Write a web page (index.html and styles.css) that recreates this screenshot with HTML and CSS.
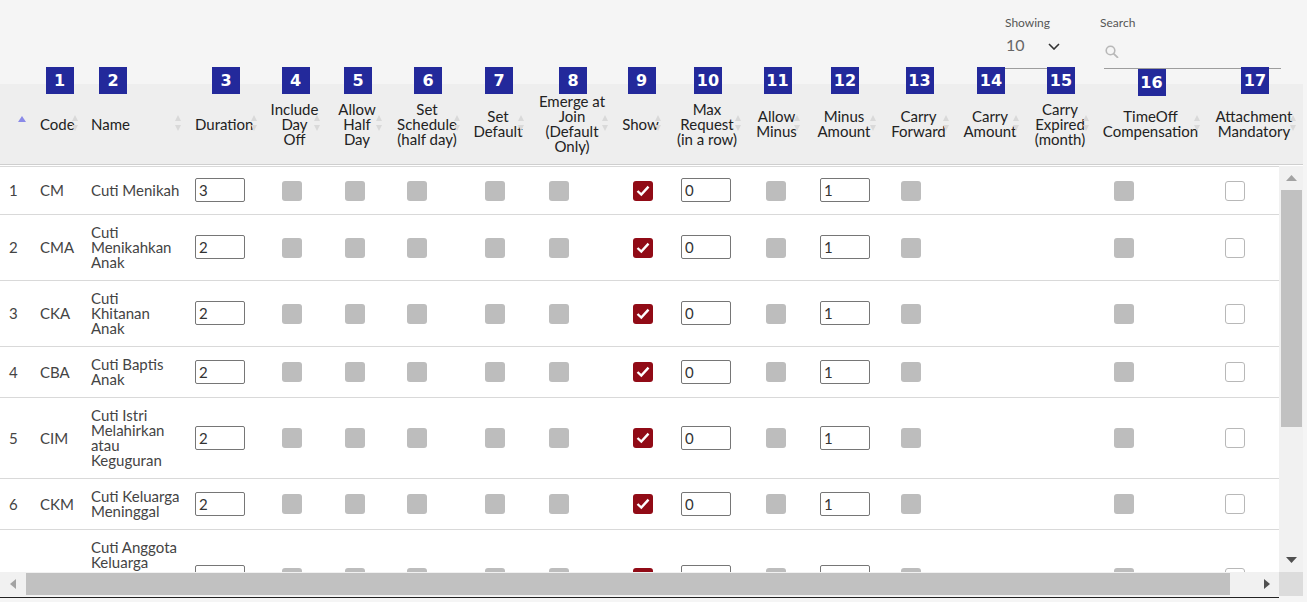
FILE: index.html
```html
<!DOCTYPE html>
<html lang="id">
<head>
<meta charset="utf-8">
<title>Time Off Types</title>
<link rel="stylesheet" href="styles.css">
</head>
<body>
<div class="toolbar">
  <div class="field showing">
    <span class="field-label">Showing</span>
    <div class="select">
      <span class="select-value">10</span>
      <svg class="chevron" width="12" height="7" viewBox="0 0 12 7"><path d="M1 1 L6 6 L11 1" fill="none" stroke="#333" stroke-width="1.6"/></svg>
    </div>
  </div>
  <div class="field search">
    <span class="field-label">Search</span>
    <div class="search-box">
      <svg class="search-icon" width="14" height="13" viewBox="0 0 14 13"><circle cx="5.5" cy="5.5" r="4.3" fill="none" stroke="#b8b8b8" stroke-width="1.6"/><path d="M8.6 8.6 L12.5 12.3" stroke="#b8b8b8" stroke-width="1.8" stroke-linecap="round"/></svg>
    </div>
  </div>
</div>

<div class="table-frame">
  <div class="head-wrap">
    <table class="dt">
      <colgroup>
        <col class="w-idx"><col class="w-code"><col class="w-name"><col class="w-dur"><col class="w-inc"><col class="w-half"><col class="w-sched"><col class="w-def"><col class="w-emerge"><col class="w-show"><col class="w-max"><col class="w-minus"><col class="w-mamt"><col class="w-cfwd"><col class="w-camt"><col class="w-cexp"><col class="w-comp"><col class="w-att">
      </colgroup>
      <thead>
        <tr>
          <th class="sorting-asc"></th>
          <th class="sorting left"><span class="badge">1</span>Code</th>
          <th class="sorting left"><span class="badge at-text">2</span>Name</th>
          <th class="sorting left dur"><span class="badge">3</span>Duration</th>
          <th class="sorting"><span class="badge">4</span>Include<br>Day<br>Off</th>
          <th class="sorting"><span class="badge">5</span>Allow<br>Half<br>Day</th>
          <th class="sorting"><span class="badge">6</span>Set<br>Schedule<br>(half day)</th>
          <th class="sorting"><span class="badge">7</span>Set<br>Default</th>
          <th class="sorting"><span class="badge">8</span>Emerge at<br>Join<br>(Default<br>Only)</th>
          <th class="sorting"><span class="badge">9</span>Show</th>
          <th class="sorting"><span class="badge">10</span>Max<br>Request<br>(in a row)</th>
          <th class="sorting"><span class="badge">11</span>Allow<br>Minus</th>
          <th class="sorting"><span class="badge">12</span>Minus<br>Amount</th>
          <th class="sorting"><span class="badge">13</span>Carry<br>Forward</th>
          <th class="sorting"><span class="badge">14</span>Carry<br>Amount</th>
          <th class="sorting"><span class="badge">15</span>Carry<br>Expired<br>(month)</th>
          <th class="sorting"><span class="badge low">16</span>TimeOff<br>Compensation</th>
          <th class="sorting"><span class="badge">17</span>Attachment<br>Mandatory</th>
        </tr>
      </thead>
    </table>
  </div>

  <div class="body-row">
    <div class="viewport">
      <table class="dt">
        <colgroup>
          <col class="w-idx"><col class="w-code"><col class="w-name"><col class="w-dur"><col class="w-inc"><col class="w-half"><col class="w-sched"><col class="w-def"><col class="w-emerge"><col class="w-show"><col class="w-max"><col class="w-minus"><col class="w-mamt"><col class="w-cfwd"><col class="w-camt"><col class="w-cexp"><col class="w-comp"><col class="w-att">
        </colgroup>
        <tbody>
          <tr>
            <td class="idx">1</td><td>CM</td><td class="name">Cuti Menikah</td>
            <td class="in-first"><input class="num" type="text" value="3"></td>
            <td class="cbx"><span class="cb off"></span></td><td class="cbx"><span class="cb off"></span></td><td class="cbx"><span class="cb off"></span></td><td class="cbx"><span class="cb off"></span></td><td class="cbx"><span class="cb off"></span></td>
            <td class="cbx"><span class="cb on"><svg width="20" height="20" viewBox="0 0 20 20"><path d="M4.5 10 L8.3 13.6 L15.5 5.6" fill="none" stroke="#fff" stroke-width="2.4"/></svg></span></td>
            <td class="in"><input class="num" type="text" value="0"></td>
            <td class="cbx"><span class="cb off"></span></td>
            <td class="in"><input class="num" type="text" value="1"></td>
            <td class="cbx"><span class="cb off"></span></td>
            <td></td><td></td>
            <td class="cbx"><span class="cb off"></span></td>
            <td class="cbx"><span class="cb empty"></span></td>
          </tr>
          <tr>
            <td class="idx">2</td><td>CMA</td><td class="name">Cuti Menikahkan Anak</td>
            <td class="in-first"><input class="num" type="text" value="2"></td>
            <td class="cbx"><span class="cb off"></span></td><td class="cbx"><span class="cb off"></span></td><td class="cbx"><span class="cb off"></span></td><td class="cbx"><span class="cb off"></span></td><td class="cbx"><span class="cb off"></span></td>
            <td class="cbx"><span class="cb on"><svg width="20" height="20" viewBox="0 0 20 20"><path d="M4.5 10 L8.3 13.6 L15.5 5.6" fill="none" stroke="#fff" stroke-width="2.4"/></svg></span></td>
            <td class="in"><input class="num" type="text" value="0"></td>
            <td class="cbx"><span class="cb off"></span></td>
            <td class="in"><input class="num" type="text" value="1"></td>
            <td class="cbx"><span class="cb off"></span></td>
            <td></td><td></td>
            <td class="cbx"><span class="cb off"></span></td>
            <td class="cbx"><span class="cb empty"></span></td>
          </tr>
          <tr>
            <td class="idx">3</td><td>CKA</td><td class="name">Cuti Khitanan Anak</td>
            <td class="in-first"><input class="num" type="text" value="2"></td>
            <td class="cbx"><span class="cb off"></span></td><td class="cbx"><span class="cb off"></span></td><td class="cbx"><span class="cb off"></span></td><td class="cbx"><span class="cb off"></span></td><td class="cbx"><span class="cb off"></span></td>
            <td class="cbx"><span class="cb on"><svg width="20" height="20" viewBox="0 0 20 20"><path d="M4.5 10 L8.3 13.6 L15.5 5.6" fill="none" stroke="#fff" stroke-width="2.4"/></svg></span></td>
            <td class="in"><input class="num" type="text" value="0"></td>
            <td class="cbx"><span class="cb off"></span></td>
            <td class="in"><input class="num" type="text" value="1"></td>
            <td class="cbx"><span class="cb off"></span></td>
            <td></td><td></td>
            <td class="cbx"><span class="cb off"></span></td>
            <td class="cbx"><span class="cb empty"></span></td>
          </tr>
          <tr>
            <td class="idx">4</td><td>CBA</td><td class="name">Cuti Baptis Anak</td>
            <td class="in-first"><input class="num" type="text" value="2"></td>
            <td class="cbx"><span class="cb off"></span></td><td class="cbx"><span class="cb off"></span></td><td class="cbx"><span class="cb off"></span></td><td class="cbx"><span class="cb off"></span></td><td class="cbx"><span class="cb off"></span></td>
            <td class="cbx"><span class="cb on"><svg width="20" height="20" viewBox="0 0 20 20"><path d="M4.5 10 L8.3 13.6 L15.5 5.6" fill="none" stroke="#fff" stroke-width="2.4"/></svg></span></td>
            <td class="in"><input class="num" type="text" value="0"></td>
            <td class="cbx"><span class="cb off"></span></td>
            <td class="in"><input class="num" type="text" value="1"></td>
            <td class="cbx"><span class="cb off"></span></td>
            <td></td><td></td>
            <td class="cbx"><span class="cb off"></span></td>
            <td class="cbx"><span class="cb empty"></span></td>
          </tr>
          <tr>
            <td class="idx">5</td><td>CIM</td><td class="name">Cuti Istri Melahirkan atau Keguguran</td>
            <td class="in-first"><input class="num" type="text" value="2"></td>
            <td class="cbx"><span class="cb off"></span></td><td class="cbx"><span class="cb off"></span></td><td class="cbx"><span class="cb off"></span></td><td class="cbx"><span class="cb off"></span></td><td class="cbx"><span class="cb off"></span></td>
            <td class="cbx"><span class="cb on"><svg width="20" height="20" viewBox="0 0 20 20"><path d="M4.5 10 L8.3 13.6 L15.5 5.6" fill="none" stroke="#fff" stroke-width="2.4"/></svg></span></td>
            <td class="in"><input class="num" type="text" value="0"></td>
            <td class="cbx"><span class="cb off"></span></td>
            <td class="in"><input class="num" type="text" value="1"></td>
            <td class="cbx"><span class="cb off"></span></td>
            <td></td><td></td>
            <td class="cbx"><span class="cb off"></span></td>
            <td class="cbx"><span class="cb empty"></span></td>
          </tr>
          <tr>
            <td class="idx">6</td><td>CKM</td><td class="name">Cuti Keluarga Meninggal</td>
            <td class="in-first"><input class="num" type="text" value="2"></td>
            <td class="cbx"><span class="cb off"></span></td><td class="cbx"><span class="cb off"></span></td><td class="cbx"><span class="cb off"></span></td><td class="cbx"><span class="cb off"></span></td><td class="cbx"><span class="cb off"></span></td>
            <td class="cbx"><span class="cb on"><svg width="20" height="20" viewBox="0 0 20 20"><path d="M4.5 10 L8.3 13.6 L15.5 5.6" fill="none" stroke="#fff" stroke-width="2.4"/></svg></span></td>
            <td class="in"><input class="num" type="text" value="0"></td>
            <td class="cbx"><span class="cb off"></span></td>
            <td class="in"><input class="num" type="text" value="1"></td>
            <td class="cbx"><span class="cb off"></span></td>
            <td></td><td></td>
            <td class="cbx"><span class="cb off"></span></td>
            <td class="cbx"><span class="cb empty"></span></td>
          </tr>
          <tr>
            <td class="idx">7</td><td>CAKM</td><td class="name">Cuti Anggota Keluarga Serumah Meninggal Dunia</td>
            <td class="in-first"><input class="num" type="text" value="2"></td>
            <td class="cbx"><span class="cb off"></span></td><td class="cbx"><span class="cb off"></span></td><td class="cbx"><span class="cb off"></span></td><td class="cbx"><span class="cb off"></span></td><td class="cbx"><span class="cb off"></span></td>
            <td class="cbx"><span class="cb on"><svg width="20" height="20" viewBox="0 0 20 20"><path d="M4.5 10 L8.3 13.6 L15.5 5.6" fill="none" stroke="#fff" stroke-width="2.4"/></svg></span></td>
            <td class="in"><input class="num" type="text" value="0"></td>
            <td class="cbx"><span class="cb off"></span></td>
            <td class="in"><input class="num" type="text" value="1"></td>
            <td class="cbx"><span class="cb off"></span></td>
            <td></td><td></td>
            <td class="cbx"><span class="cb off"></span></td>
            <td class="cbx"><span class="cb empty"></span></td>
          </tr>
        </tbody>
      </table>
    </div>
    <div class="vscroll">
      <div class="sb-btn"><svg width="11" height="6" viewBox="0 0 11 6"><polygon points="0,6 5.5,0 11,6" fill="#a3a3a3"/></svg></div>
      <div class="sb-track v"><div class="sb-thumb v"></div></div>
      <div class="sb-btn"><svg width="11" height="6" viewBox="0 0 11 6"><polygon points="0,0 11,0 5.5,6" fill="#505050"/></svg></div>
    </div>
  </div>

  <div class="hscroll-row">
    <div class="hscroll">
      <div class="sb-btn h-left"><svg width="6" height="10" viewBox="0 0 6 10"><polygon points="6,0 0,5 6,10" fill="#a3a3a3"/></svg></div>
      <div class="sb-track h"><div class="sb-thumb h"></div></div>
      <div class="sb-btn h-right"><svg width="6" height="10" viewBox="0 0 6 10"><polygon points="0,0 6,5 0,10" fill="#505050"/></svg></div>
    </div>
    <div class="sb-corner"></div>
  </div>
  <div class="foot-line"></div>
</div>
</body>
</html>
```

FILE: styles.css
```css
* { box-sizing: border-box; }

html, body {
  margin: 0;
  padding: 0;
}

body {
  width: 1307px;
  height: 602px;
  overflow: hidden;
  background: #f5f5f5;
  font-family: Lato, "Open Sans", sans-serif;
  color: #333;
}

/* ---------- toolbar ---------- */
.toolbar {
  height: 84px;
  display: flex;
  justify-content: flex-end;
  gap: 25px;
  padding: 16px 26px 0 0;
}

.field-label {
  display: block;
  font-size: 12px;
  line-height: 14px;
  color: #555;
}

.field.showing { width: 70px; }
.field.search { width: 181px; }

.select {
  height: 39px;
  display: flex;
  align-items: flex-start;
  padding-top: 6px;
  border-bottom: 1px solid #9d9d9d;
}

.select-value {
  font-size: 16px;
  line-height: 18px;
  color: #666;
  padding-left: 1px;
}

.chevron {
  margin: 7px 15px 0 auto;
}

.search-box {
  height: 39px;
  margin-left: 4px;
  border-bottom: 1px solid #9d9d9d;
  padding: 15px 0 0 1px;
}

.search-icon { display: block; }

/* ---------- table frame ---------- */
.table-frame {
  width: 1303px;
}

.head-wrap {
  background: #eeeeee;
  border-bottom: 1px solid #cfcfcf;
}

.dt {
  width: 1299px;
  table-layout: fixed;
  border-collapse: collapse;
  border-spacing: 0;
}

.w-idx { width: 30px; }
.w-code { width: 51px; }
.w-name { width: 103px; }
.w-dur { width: 76px; }
.w-inc { width: 63px; }
.w-half { width: 62px; }
.w-sched { width: 78px; }
.w-def { width: 64px; }
.w-emerge { width: 84px; }
.w-show { width: 53px; }
.w-max { width: 80px; }
.w-minus { width: 59px; }
.w-mamt { width: 76px; }
.w-cfwd { width: 73px; }
.w-camt { width: 70px; }
.w-cexp { width: 70px; }
.w-comp { width: 111px; }
.w-att { width: 96px; }

.dt th {
  position: relative;
  height: 80px;
  padding: 10px 4px 10px 10px;
  font-size: 15px;
  line-height: 15px;
  font-weight: 400;
  color: #222;
  text-align: center;
  vertical-align: middle;
  white-space: nowrap;
}

.dt th.left { text-align: left; }
.dt th.dur { padding-left: 11px; }

.dt th.sorting::before,
.dt th.sorting::after,
.dt th.sorting-asc::before {
  content: "";
  position: absolute;
  right: 3px;
  width: 0;
  height: 0;
  border-left: 3px solid transparent;
  border-right: 3px solid transparent;
}

.dt th.sorting::before {
  top: calc(50% - 9px);
  border-bottom: 6px solid #d9d9d9;
}

.dt th.sorting::after {
  top: calc(50% + 1px);
  border-top: 6px solid #d9d9d9;
}

.dt th.sorting-asc::before {
  right: 4px;
  top: calc(50% - 8px);
  border-left-width: 4px;
  border-right-width: 4px;
  border-bottom: 6px solid #8a8ae8;
}

.badge {
  position: absolute;
  top: -17px;
  left: calc(50% + 4px);
  transform: translateX(-50%);
  width: 28px;
  height: 27px;
  background: #23299b;
  color: #fff;
  font-family: "DejaVu Sans", Verdana, sans-serif;
  font-weight: 700;
  font-size: 16px;
  line-height: 27px;
  text-align: center;
  z-index: 2;
}

.badge.at-text {
  left: 18px;
  transform: none;
}

.badge.low { top: -15px; }

/* ---------- body ---------- */
.body-row {
  display: flex;
  border-top: 1px solid #ffffff;
}

.viewport {
  width: 1279px;
  height: 406px;
  overflow: hidden;
  background: #fff;
  border-top: 1px solid #d9d9d9;
}

.dt td {
  padding: 10px 4px 10px 10px;
  font-size: 15px;
  line-height: 15px;
  color: #444;
  vertical-align: middle;
  border-bottom: 1px solid #d9d9d9;
}

.dt td.idx { padding-left: 9px; }
.dt td.name { padding-right: 4px; }
.dt td.in-first { padding-left: 11px; }
.dt td.in { padding-left: 17px; }
.dt td.cbx { padding-left: 22px; }

.num {
  display: block;
  width: 50px;
  height: 24px;
  margin: 1px 0 2px;
  padding: 0 3px;
  border: 1px solid #767676;
  border-radius: 2px;
  background: #fff;
  font-family: Lato, sans-serif;
  font-size: 15px;
  color: #333;
}

.cb {
  display: block;
  width: 20px;
  height: 20px;
  border-radius: 3px;
}

.cb svg { display: block; }

.cb.off { background: #bdbdbd; }
.cb.on { background: #910b16; }
.cb.empty {
  background: #fff;
  border: 1px solid #b8b8b8;
}

/* ---------- scrollbars ---------- */
.vscroll {
  width: 24px;
  height: 406px;
  display: flex;
  flex-direction: column;
  background: #f1f1f1;
}

.sb-btn {
  flex: none;
  height: 24px;
  display: flex;
  align-items: center;
  justify-content: center;
}

.sb-btn svg { display: block; }

.sb-track { flex: 1; }

.sb-thumb { background: #c1c1c1; }

.sb-thumb.v {
  height: 237px;
  margin: 0 1px 0 2px;
}

.hscroll-row {
  display: flex;
  height: 24px;
}

.hscroll {
  width: 1279px;
  display: flex;
  background: #f1f1f1;
}

.hscroll .sb-btn { height: 24px; }
.sb-btn.h-left { width: 26px; }
.sb-btn.h-right { width: 25px; }

.sb-track.h {
  display: flex;
  align-items: stretch;
}

.sb-thumb.h {
  width: 1204px;
  margin: 1px 0;
}

.sb-corner {
  width: 24px;
  background: #dcdcdc;
}

.foot-line {
  width: 1279px;
  height: 1px;
  margin-top: 1px;
  background: #222;
}
```
